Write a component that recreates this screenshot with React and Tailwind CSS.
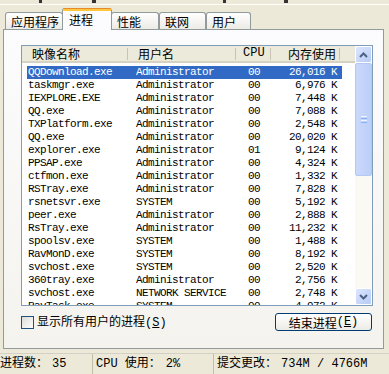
import React from 'react'

const rows = [
  ['QQDownload.exe', 'Administrator', '00', '26,016 K'],
  ['taskmgr.exe', 'Administrator', '00', '6,976 K'],
  ['IEXPLORE.EXE', 'Administrator', '00', '7,448 K'],
  ['QQ.exe', 'Administrator', '00', '7,088 K'],
  ['TXPlatform.exe', 'Administrator', '00', '2,548 K'],
  ['QQ.exe', 'Administrator', '00', '20,020 K'],
  ['explorer.exe', 'Administrator', '01', '9,124 K'],
  ['PPSAP.exe', 'Administrator', '00', '4,324 K'],
  ['ctfmon.exe', 'Administrator', '00', '1,332 K'],
  ['RSTray.exe', 'Administrator', '00', '7,828 K'],
  ['rsnetsvr.exe', 'SYSTEM', '00', '5,192 K'],
  ['peer.exe', 'Administrator', '00', '2,888 K'],
  ['RsTray.exe', 'Administrator', '00', '11,232 K'],
  ['spoolsv.exe', 'SYSTEM', '00', '1,488 K'],
  ['RavMonD.exe', 'SYSTEM', '00', '8,192 K'],
  ['svchost.exe', 'SYSTEM', '00', '2,520 K'],
  ['360tray.exe', 'Administrator', '00', '2,756 K'],
  ['svchost.exe', 'NETWORK SERVICE', '00', '2,748 K'],
  ['RavTask.exe', 'SYSTEM', '00', '4,972 K'],
]

const tabs = [
  { label: '应用程序', w: 'w-[58px]' },
  { label: '进程', w: 'w-[50px]', active: true },
  { label: '性能', w: 'w-[48px]' },
  { label: '联网', w: 'w-[47px]' },
  { label: '用户', w: 'w-[45px]' },
]

function Chevron({ down }) {
  return (
    <svg width="9" height="6" viewBox="0 0 9 6">
      <path
        d={down ? 'M1 1 L4.5 4.5 L8 1' : 'M1 5 L4.5 1.5 L8 5'}
        fill="none"
        stroke="#4D6185"
        strokeWidth="2"
      />
    </svg>
  )
}

function ScrollButton({ down }) {
  return (
    <div className="h-[17px] w-[17px] shrink-0 rounded-[2px] border border-white bg-gradient-to-br from-[#DCE6FD] to-[#B7CBF7] flex items-center justify-center">
      <Chevron down={down} />
    </div>
  )
}

function Row({ r, selected }) {
  return (
    <div className="flex h-[13px] shrink-0 pl-[5px]">
      <div
        className={
          'flex h-full w-[315px] items-center whitespace-nowrap ' +
          (selected ? 'bg-[#316AC5] text-white' : 'text-black')
        }
      >
        <span className="w-[101px] shrink-0 pl-px">{r[0]}</span>
        <span className="w-[109px] shrink-0 pl-[8px]">{r[1]}</span>
        <span className="w-[34px] shrink-0 text-center">{r[2]}</span>
        <span className="w-[70px] shrink-0 pr-[4px] text-right">{r[3]}</span>
      </div>
    </div>
  )
}

export default function App() {
  return (
    <div className="flex h-[374px] w-[389px] flex-col overflow-hidden bg-[#ECE9D8] font-['Liberation_Mono','Noto_Sans_CJK_SC',monospace] text-[12px] text-black">
      {/* menu bar remnant */}
      <div className="flex h-[5px] shrink-0 border-b border-white">
        <span className="ml-[39px] h-[3px] w-[3px] bg-[#333]" />
        <span className="ml-[50px] h-[3px] w-[4px] bg-[#333]" />
        <span className="ml-[127px] h-[3px] w-[3px] bg-[#333]" />
        <span className="ml-[58px] h-[3px] w-[4px] bg-[#333]" />
      </div>

      <div className="flex flex-col pl-[3px] pr-[5px]">
        {/* tabs */}
        <div className="flex h-[24px] items-end pl-[2px]">
          {tabs.map((t) =>
            t.active ? (
              <div
                key={t.label}
                className={`${t.w} relative z-10 -mx-[1px] -mb-px flex h-[22px] shrink-0 flex-col rounded-t-[3px] border-x border-[#919B9C] bg-[#FCFCFE]`}
              >
                <div className="h-[1px] rounded-t-[3px] bg-[#E68B2C]" />
                <div className="h-[2px] bg-[#FFC73C]" />
                <div className="pl-[6px] pt-[1px] font-['Noto_Sans_CJK_SC',sans-serif] text-[12px] leading-[15px]">
                  {t.label}
                </div>
              </div>
            ) : (
              <div
                key={t.label}
                className={`${t.w} flex h-[17px] shrink-0 items-center rounded-t-[3px] border-x border-t border-[#919B9C] bg-gradient-to-b from-white to-[#ECEBE6] pl-[5px] font-['Noto_Sans_CJK_SC',sans-serif] text-[12px] leading-[15px]`}
              >
                {t.label}
              </div>
            )
          )}
        </div>

        {/* panel */}
        <div className="flex h-[320px] flex-col border border-[#919B9C] bg-gradient-to-b from-[#FCFCFE] to-[#F4F3EE] pl-[17px]">
          {/* list view */}
          <div className="mt-[15px] flex h-[261px] w-[352px] border border-[#7F9DB9] bg-white">
            <div className="flex w-[333px] flex-col overflow-hidden">
              {/* header */}
              <div className="flex h-[17px] shrink-0 items-center border-b-2 border-[#D6D2C2] bg-[#EBEADB] font-['Noto_Sans_CJK_SC',sans-serif] text-[12px] leading-[15px]">
                <div className="flex w-[106px] shrink-0 items-center justify-between pl-[10px]">
                  <span>映像名称</span>
                  <span className="h-[12px] w-px bg-[#C7C5B2]" />
                </div>
                <div className="flex w-[108px] shrink-0 items-center justify-between pl-[10px]">
                  <span>用户名</span>
                  <span className="h-[12px] w-px bg-[#C7C5B2]" />
                </div>
                <div className="flex w-[35px] shrink-0 items-center justify-between">
                  <span className="pl-[7px] font-['Liberation_Mono',monospace] text-[12px]">CPU</span>
                  <span className="h-[12px] w-px bg-[#C7C5B2]" />
                </div>
                <div className="flex w-[69px] shrink-0 items-center justify-between">
                  <span className="pl-[17px]">内存使用</span>
                  <span className="h-[12px] w-px bg-[#C7C5B2]" />
                </div>
              </div>
              {/* rows */}
              <div className="flex flex-col pt-[3px] text-[11px] leading-[13px] tracking-[-0.6px]">
                {rows.map((r, i) => (
                  <Row key={i} r={r} selected={i === 0} />
                ))}
              </div>
            </div>
            {/* scrollbar */}
            <div className="ml-auto flex w-[17px] flex-col bg-[#FAF9F4]">
              <ScrollButton />
              <div className="flex h-[113px] shrink-0 items-center justify-center rounded-[2px] border border-[#B4C8F6] bg-gradient-to-r from-[#CAD8FB] to-[#BCCFF8]">
                <div className="flex flex-col gap-[1px]">
                  <span className="h-px w-[6px] bg-[#EEF4FE]" />
                  <span className="h-px w-[6px] bg-[#8CB0F8]" />
                  <span className="h-px w-[6px] bg-[#EEF4FE]" />
                  <span className="h-px w-[6px] bg-[#8CB0F8]" />
                </div>
              </div>
              <div className="flex-1" />
              <ScrollButton down />
            </div>
          </div>

          {/* bottom controls */}
          <div className="mt-[7px] flex h-[18px] w-[351px] items-center">
            <span className="h-[13px] w-[13px] shrink-0 border border-[#1C5180] bg-gradient-to-br from-[#DCDCD7] to-white" />
            <span className="ml-[3px] font-['Noto_Sans_CJK_SC',sans-serif] text-[12px] leading-[15px]">
              显示所有用户的进程
              <span className="font-['Liberation_Mono',monospace]">
                (<span className="underline">S</span>)
              </span>
            </span>
            <button className="ml-auto flex h-[18px] w-[97px] items-center justify-center rounded-[3px] border border-[#003C74] bg-gradient-to-b from-white to-[#ECEBE6] font-['Noto_Sans_CJK_SC',sans-serif] text-[12px] leading-[15px]">
              结束进程
              <span className="font-['Liberation_Mono',monospace]">
                (<span className="underline">E</span>)
              </span>
            </button>
          </div>
        </div>
      </div>

      {/* status bar */}
      <div className="mt-[4px] flex h-[21px] items-center border-t border-[#D4D0C8] text-[12px] leading-[15px]">
        <div className="flex h-full w-[93px] shrink-0 items-center border-r border-[#C2BFA5]">
          进程数：<span className="ml-[4px]">35</span>
        </div>
        <div className="flex h-full w-[121px] shrink-0 items-center border-r border-[#C2BFA5] pl-[3px]">
          CPU 使用：<span className="ml-[5px]">2%</span>
        </div>
        <div className="flex h-full flex-1 items-center pl-[3px]">
          提交更改：<span className="ml-[4px]">734M / 4766M</span>
        </div>
      </div>
    </div>
  )
}
